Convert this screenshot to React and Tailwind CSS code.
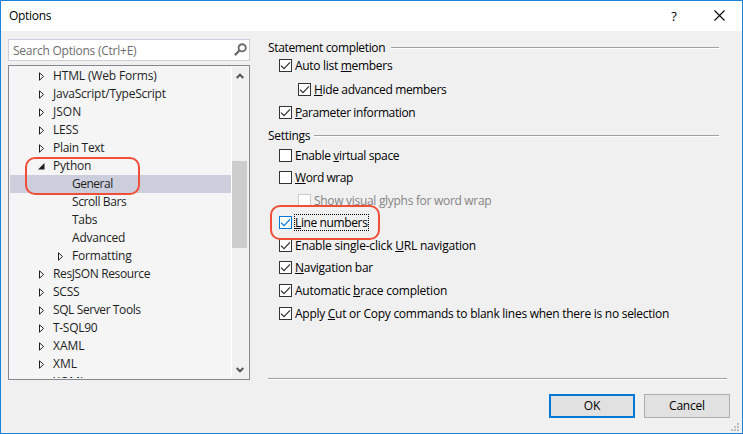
import React from "react";

const tree = [
  { label: "HTML (Web Forms)", t: "tracking-[-0.15px]" },
  { label: "JavaScript/TypeScript", t: "tracking-[-0.22px]" },
  { label: "JSON", t: "" },
  { label: "LESS", t: "tracking-[-0.2px]" },
  { label: "Plain Text", t: "tracking-[-0.3px]" },
  { label: "Python", open: true, t: "tracking-[-0.2px]" },
  { label: "General", leaf: true, selected: true, t: "tracking-[-0.5px]" },
  { label: "Scroll Bars", leaf: true, t: "tracking-[-0.4px]" },
  { label: "Tabs", leaf: true, t: "tracking-[-0.3px]" },
  { label: "Advanced", leaf: true, t: "tracking-[-0.2px]" },
  { label: "Formatting", nested: true, t: "tracking-[-0.2px]" },
  { label: "ResJSON Resource", t: "tracking-[-0.37px]" },
  { label: "SCSS", t: "tracking-[-0.25px]" },
  { label: "SQL Server Tools", t: "tracking-[-0.4px]" },
  { label: "T-SQL90", t: "tracking-[-0.3px]" },
  { label: "XAML", t: "" },
  { label: "XML", t: "" },
  { label: "XOML", t: "" },
];

// "&" marks the mnemonic letter of each label.
const completion = [
  { label: "Auto list &members", on: true, gap: "mt-[3px]", t: "tracking-[-0.3px]" },
  { label: "&Hide advanced members", on: true, indent: true, gap: "mt-[11px]", t: "tracking-[-0.35px]" },
  { label: "&Parameter information", on: true, gap: "mt-[10px]", t: "tracking-[-0.4px]" },
];
const settings = [
  { label: "Enable &virtual space", gap: "mt-[5px]", t: "tracking-[-0.37px]" },
  { label: "&Word wrap", gap: "mt-[9px]", t: "tracking-[-0.44px]" },
  { label: "Show visual glyphs for word wrap", indent: true, disabled: true, gap: "mt-[10px]", t: "tracking-[-0.3px]" },
  { label: "&Line numbers", on: true, focus: true, gap: "mt-[9px]", t: "tracking-[-0.38px]" },
  { label: "Enable single-click &URL navigation", on: true, gap: "mt-[10px]", t: "tracking-[-0.2px]" },
  { label: "&Navigation bar", on: true, gap: "mt-[9px]", t: "tracking-[-0.28px]" },
  { label: "Automatic &brace completion", on: true, gap: "mt-[10px]", t: "tracking-[-0.23px]" },
  { label: "Apply &Cut or Copy commands to blank lines when there is no selection", on: true, gap: "mt-[10px]", t: "tracking-[-0.27px]" },
];

function Mnemonic({ text }) {
  const i = text.indexOf("&");
  if (i < 0) return text;
  return (
    <>
      {text.slice(0, i)}
      <span className="underline decoration-1 underline-offset-1 [text-decoration-skip-ink:none]">{text[i + 1]}</span>
      {text.slice(i + 2)}
    </>
  );
}

function Check({ item }) {
  const border = item.focus ? "border-[#0078d7] text-[#0078d7]" : item.disabled ? "border-[#cccccc]" : "border-[#333333] text-[#333333]";
  return (
    <label className={`flex h-[13px] items-center ${item.gap} ${item.indent ? "ml-[30px]" : "ml-[11px]"}`}>
      <span className={`h-[13px] w-[13px] shrink-0 border bg-white ${border}`}>
        {item.on && (
          <svg viewBox="0 0 11 11" width="11" height="11" className="block">
            <path d="M1 5.6 L4 8.6 L10 2.4" fill="none" stroke="currentColor" strokeWidth="1.3" />
          </svg>
        )}
      </span>
      <span
        className={`ml-[2px] flex h-[17px] items-center whitespace-pre border border-dotted ${item.focus ? "border-black" : "border-transparent"} ${item.disabled ? "text-[#848484]" : ""}`}
      >
        <span className={item.t}><Mnemonic text={item.label} /></span>
      </span>
    </label>
  );
}

function Heading({ children, t, w }) {
  return (
    <div className="flex h-[18px] items-center pt-[2px]">
      <span className={`shrink-0 whitespace-nowrap ${w} ${t}`}>{children}</span>
      <span className="h-[2px] w-full border-b border-t border-b-white border-t-[#a0a0a0]" />
    </div>
  );
}

function Arrow({ open }) {
  return open ? (
    <svg width="7" height="7" viewBox="0 0 7 7" className="-ml-px mr-2 shrink-0">
      <path d="M6.5 0 V6.5 H0 Z" fill="#1e1e1e" />
    </svg>
  ) : (
    <svg width="6" height="9" viewBox="0 0 6 9" className="mr-2 shrink-0">
      <path d="M.5 .8 V8.2 L4.5 4.5 Z" fill="#fff" stroke="#1e1e1e" strokeWidth="1" />
    </svg>
  );
}

export default function App() {
  return (
    <div className="relative flex h-[434px] w-[743px] flex-col overflow-hidden border border-[#1883d7] bg-[#f0f0f0] font-['Open_Sans','Noto_Sans',sans-serif] text-[12px] leading-[16px] text-black">
      <header className="flex h-[30px] shrink-0 items-center bg-white pl-2">
        <span className="tracking-[-0.3px]">Options</span>
        <span className="ml-auto mr-[36px] w-[8px] text-center text-[13px] font-medium">?</span>
        <svg width="11" height="11" viewBox="0 0 11 11" className="mb-px mr-[17px]">
          <path d="M.5 .5 L10.5 10.5 M10.5 .5 L.5 10.5" stroke="#000" strokeWidth="1.1" />
        </svg>
      </header>

      <div className="flex h-[349px] shrink-0 pl-[7px]">
        <div className="flex w-[242px] shrink-0 flex-col gap-1 pt-2">
          <div className="flex h-[22px] shrink-0 items-center border border-[#cccedb] bg-white pl-1 pt-px text-[#6d6d6d]">
            <span className="tracking-[-0.24px]">Search Options (Ctrl+E)</span>
            <svg width="13" height="13" viewBox="0 0 13 13" className="mb-[3px] ml-auto mr-[2px]">
              <circle cx="8.2" cy="4.8" r="3.6" fill="none" stroke="#6d6d6d" strokeWidth="1.9" />
              <path d="M5.5 7.5 L.9 12.1" stroke="#6d6d6d" strokeWidth="2.4" />
            </svg>
          </div>
          <div className="flex h-[315px] shrink-0 border border-[#828790] bg-[#f5f5f5] p-px text-[#1e1e1e]">
            <ul className="h-[311px] w-[221px] shrink-0 overflow-hidden">
              {tree.map((n) => (
                <li
                  key={n.label}
                  className={`flex h-[18px] items-center whitespace-nowrap ${n.leaf ? "pl-[62px]" : n.nested ? "pl-[48px]" : "pl-[29px]"} ${n.selected ? "bg-[#cccedb]" : ""}`}
                >
                  {!n.leaf && <Arrow open={n.open} />}
                  <span className={n.t}>{n.label}</span>
                </li>
              ))}
            </ul>
            <div className="flex w-[17px] flex-col items-center border-l border-white bg-[#f0f0f0]">
              <svg width="8" height="6" viewBox="0 0 8 6" className="mr-px mt-[6px] shrink-0">
                <path d="M.7 5 L4 1.7 L7.3 5" fill="none" stroke="#555" strokeWidth="2" />
              </svg>
              <div className="mt-[82px] h-[87px] w-[15px] shrink-0 self-start bg-[#cdcdcd]" />
              <svg width="8" height="6" viewBox="0 0 8 6" className="mb-[5px] mr-px mt-auto shrink-0">
                <path d="M.7 1 L4 4.3 L7.3 1" fill="none" stroke="#555" strokeWidth="2" />
              </svg>
            </div>
          </div>
        </div>

        <main className="ml-[18px] flex w-[459px] flex-col pt-[7px]">
          <div className="w-[451px]">
            <Heading w="w-[123px]" t="tracking-[-0.35px]">Statement completion</Heading>
            {completion.map((c) => <Check key={c.label} item={c} />)}
            <div className="mt-[7px]">
              <Heading w="w-[46px]" t="tracking-[-0.3px]">Settings</Heading>
            </div>
            {settings.map((c) => <Check key={c.label} item={c} />)}
          </div>
          <div className="mt-auto h-[2px] border-b border-t border-b-white border-t-[#a0a0a0]" />
        </main>
      </div>

      <footer className="flex justify-end gap-[9px] pr-[12px] pt-[14px]">
        <button className="h-[24px] w-[86px] border-2 border-[#0078d7] bg-[#e1e1e1]">OK</button>
        <button className="h-[24px] w-[86px] border border-[#adadad] bg-[#e1e1e1] tracking-[-0.2px]">Cancel</button>
      </footer>

      <svg width="8" height="8" viewBox="0 0 8 8" className="absolute bottom-[2px] right-[3px]" fill="#bfbfbf">
        <path d="M6 0h2v2h-2zM3 3h2v2h-2zM6 3h2v2h-2zM0 6h2v2h-2zM3 6h2v2h-2zM6 6h2v2h-2z" />
      </svg>
      <div className="absolute left-[24px] top-[156px] h-[38px] w-[115px] rounded-[10px] border-2 border-[#f04e37]" />
      <div className="absolute left-[269px] top-[204px] h-[35px] w-[110px] rounded-[10px] border-2 border-[#f04e37]" />
    </div>
  );
}
